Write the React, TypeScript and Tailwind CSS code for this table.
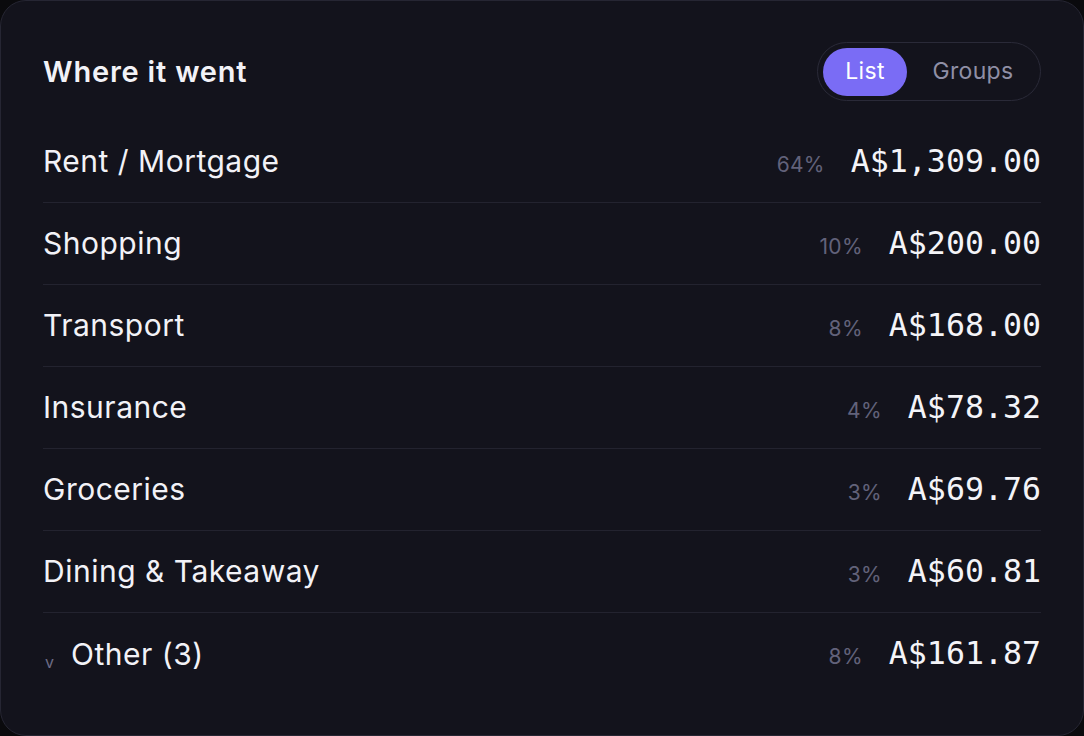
import { useState } from "react";

type Row = {
  label: string;
  pct: string;
  amount: string;
  collapsible?: boolean;
};

const ROWS: Row[] = [
  { label: "Rent / Mortgage", pct: "64%", amount: "A$1,309.00" },
  { label: "Shopping", pct: "10%", amount: "A$200.00" },
  { label: "Transport", pct: "8%", amount: "A$168.00" },
  { label: "Insurance", pct: "4%", amount: "A$78.32" },
  { label: "Groceries", pct: "3%", amount: "A$69.76" },
  { label: "Dining & Takeaway", pct: "3%", amount: "A$60.81" },
  { label: "Other (3)", pct: "8%", amount: "A$161.87", collapsible: true },
];

const SANS = "font-['Inter','Noto_Sans',sans-serif]";
const MONO = "font-['DejaVu_Sans_Mono','Liberation_Mono',monospace]";

export default function App() {
  const [view, setView] = useState<"list" | "groups">("list");

  return (
    <div className={`min-h-[736px] bg-[#0a0a0d] ${SANS}`}>
      <div className="flex h-[736px] flex-col rounded-[26px] border border-[#262633] bg-[#13131c] px-[42px] pt-[41px]">
        <div className="flex h-[59px] items-center justify-between">
          <h2 className="text-[29px] font-semibold tracking-[0.8px] text-[#f2f2f7]">
            Where it went
          </h2>
          <div className="flex h-[59px] items-center gap-[4px] rounded-full border-[1.5px] border-[#2a2a38] p-[5px]">
            <button
              onClick={() => setView("list")}
              className={`h-[48px] w-[84px] rounded-full text-[23px] tracking-[0.3px] ${
                view === "list" ? "bg-[#7a6cf5] text-white" : "text-[#8f8fa6]"
              }`}
            >
              List
            </button>
            <button
              onClick={() => setView("groups")}
              className={`h-[48px] w-[124px] rounded-full text-[23px] tracking-[0.3px] ${
                view === "groups" ? "bg-[#7a6cf5] text-white" : "text-[#8f8fa6]"
              }`}
            >
              Groups
            </button>
          </div>
        </div>

        <ul className="mt-[20px]">
          {ROWS.map((row, i) => (
            <li
              key={row.label}
              className={`flex h-[82px] items-center justify-between ${
                i < ROWS.length - 1 ? "border-b border-[#23232f]" : ""
              }`}
            >
              <div className="flex items-baseline">
                {row.collapsible && (
                  <span className="mr-[17px] ml-[2px] translate-y-[3px] text-[16px] text-[#6c6c86]">
                    v
                  </span>
                )}
                <span className="text-[30px] tracking-[0.5px] text-[#f2f2f7]">{row.label}</span>
              </div>
              <div className="flex items-baseline gap-[26px]">
                <span className="text-[21px] tracking-[0.3px] text-[#62627a]">{row.pct}</span>
                <span className={`text-[31.6px] text-[#f4f4f8] ${MONO}`}>{row.amount}</span>
              </div>
            </li>
          ))}
        </ul>
      </div>
    </div>
  );
}
